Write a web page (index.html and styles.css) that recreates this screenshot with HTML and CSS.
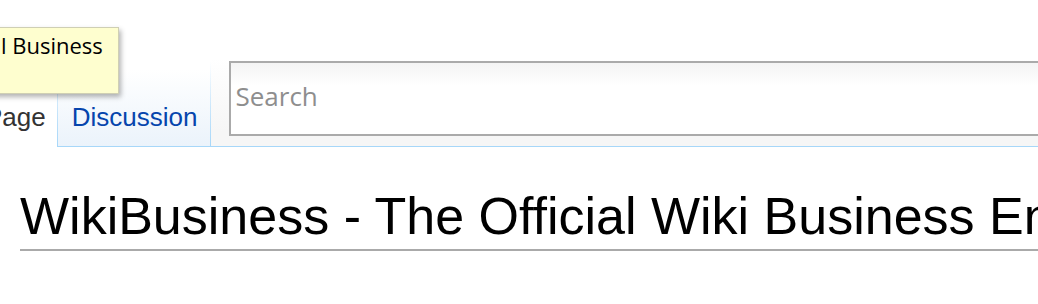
FILE: index.html
```html
<!DOCTYPE html>
<html lang="en">

<head>
    <meta charset="UTF-8">
    <meta name="viewport" content="width=device-width, initial-scale=1.0">
    <title>WikiBusiness</title>
    <link rel="stylesheet" href="styles.css">
</head>

<body>
    <header class="head">
        <nav class="tabs">
            <a class="tab selected" href="#">Page</a>
            <a class="tab" href="#">Discussion</a>
        </nav>
        <div class="search">
            <input type="search" placeholder="Search" />
        </div>
    </header>

    <h1 class="title">WikiBusiness - The Official Wiki Business Encyclopedia</h1>

    <div class="tooltip">l Business</div>
</body>

</html>
```

FILE: styles.css
```css
*,
*::before,
*::after {
    box-sizing: border-box;
    margin: 0;
    padding: 0;
}

body {
    font-family: 'Liberation Sans', Arial, sans-serif;
    width: 1038px;
    height: 304px;
    overflow: hidden;
    background: white;
    position: relative;
}

.head {
    display: flex;
    align-items: flex-end;
    height: 147px;
}

.tabs {
    display: flex;
    align-items: flex-end;
    margin-left: -27px;

    & .tab {
        display: flex;
        align-items: flex-end;
        height: 86px;
        padding: 0 14px 16px 15px;
        font-size: 26px;
        line-height: 26px;
        color: #0645ad;
        text-decoration: none;
        border-bottom: 1px solid #a7d7f9;
        background:
            linear-gradient(to bottom, rgba(167, 215, 249, 0), #a7d7f9) left bottom / 1px 100% no-repeat,
            linear-gradient(to bottom, rgba(167, 215, 249, 0), #a7d7f9) right bottom / 1px 100% no-repeat,
            linear-gradient(to bottom, #ffffff 10%, #ebf3fb 100%);

        &.selected {
            color: #333;
            padding: 0 11px 16px 12px;
            border-bottom-color: white;
            background: white;
        }
    }
}

.search {
    flex: 1;
    height: 147px;
    padding: 61px 0 11px 18px;
    border-bottom: 1px solid #a7d7f9;
    background: linear-gradient(to bottom, #ffffff 40%, #f6f6f6 90%);

    & input {
        display: block;
        width: 100%;
        height: 75px;
        border: 2px solid #aaa;
        border-right: 0;
        padding: 0 4px 6px;
        font-family: 'Open Sans', sans-serif;
        font-size: 26px;
        color: #333;
        outline: none;
        background: linear-gradient(to bottom, #f4f4f4 0, #ffffff 22px);

        &::placeholder {
            color: #8e8e8e;
        }
    }
}

.title {
    margin: 43px 0 0 20px;
    padding-bottom: 7px;
    border-bottom: 2px solid #aaa;
    font-size: 52px;
    font-weight: normal;
    line-height: 52px;
    color: #000;
    white-space: nowrap;
    overflow: hidden;
}

.tooltip {
    position: absolute;
    top: 27px;
    left: -20px;
    width: 139px;
    height: 67px;
    padding: 2px 0 0 20px;
    font-family: 'Open Sans', sans-serif;
    font-size: 22px;
    line-height: 30px;
    color: #000;
    background: #fefecf;
    border: 1px solid #cfcfb4;
    box-shadow: 2px 3px 5px rgba(0, 0, 0, 0.3);
}
```
